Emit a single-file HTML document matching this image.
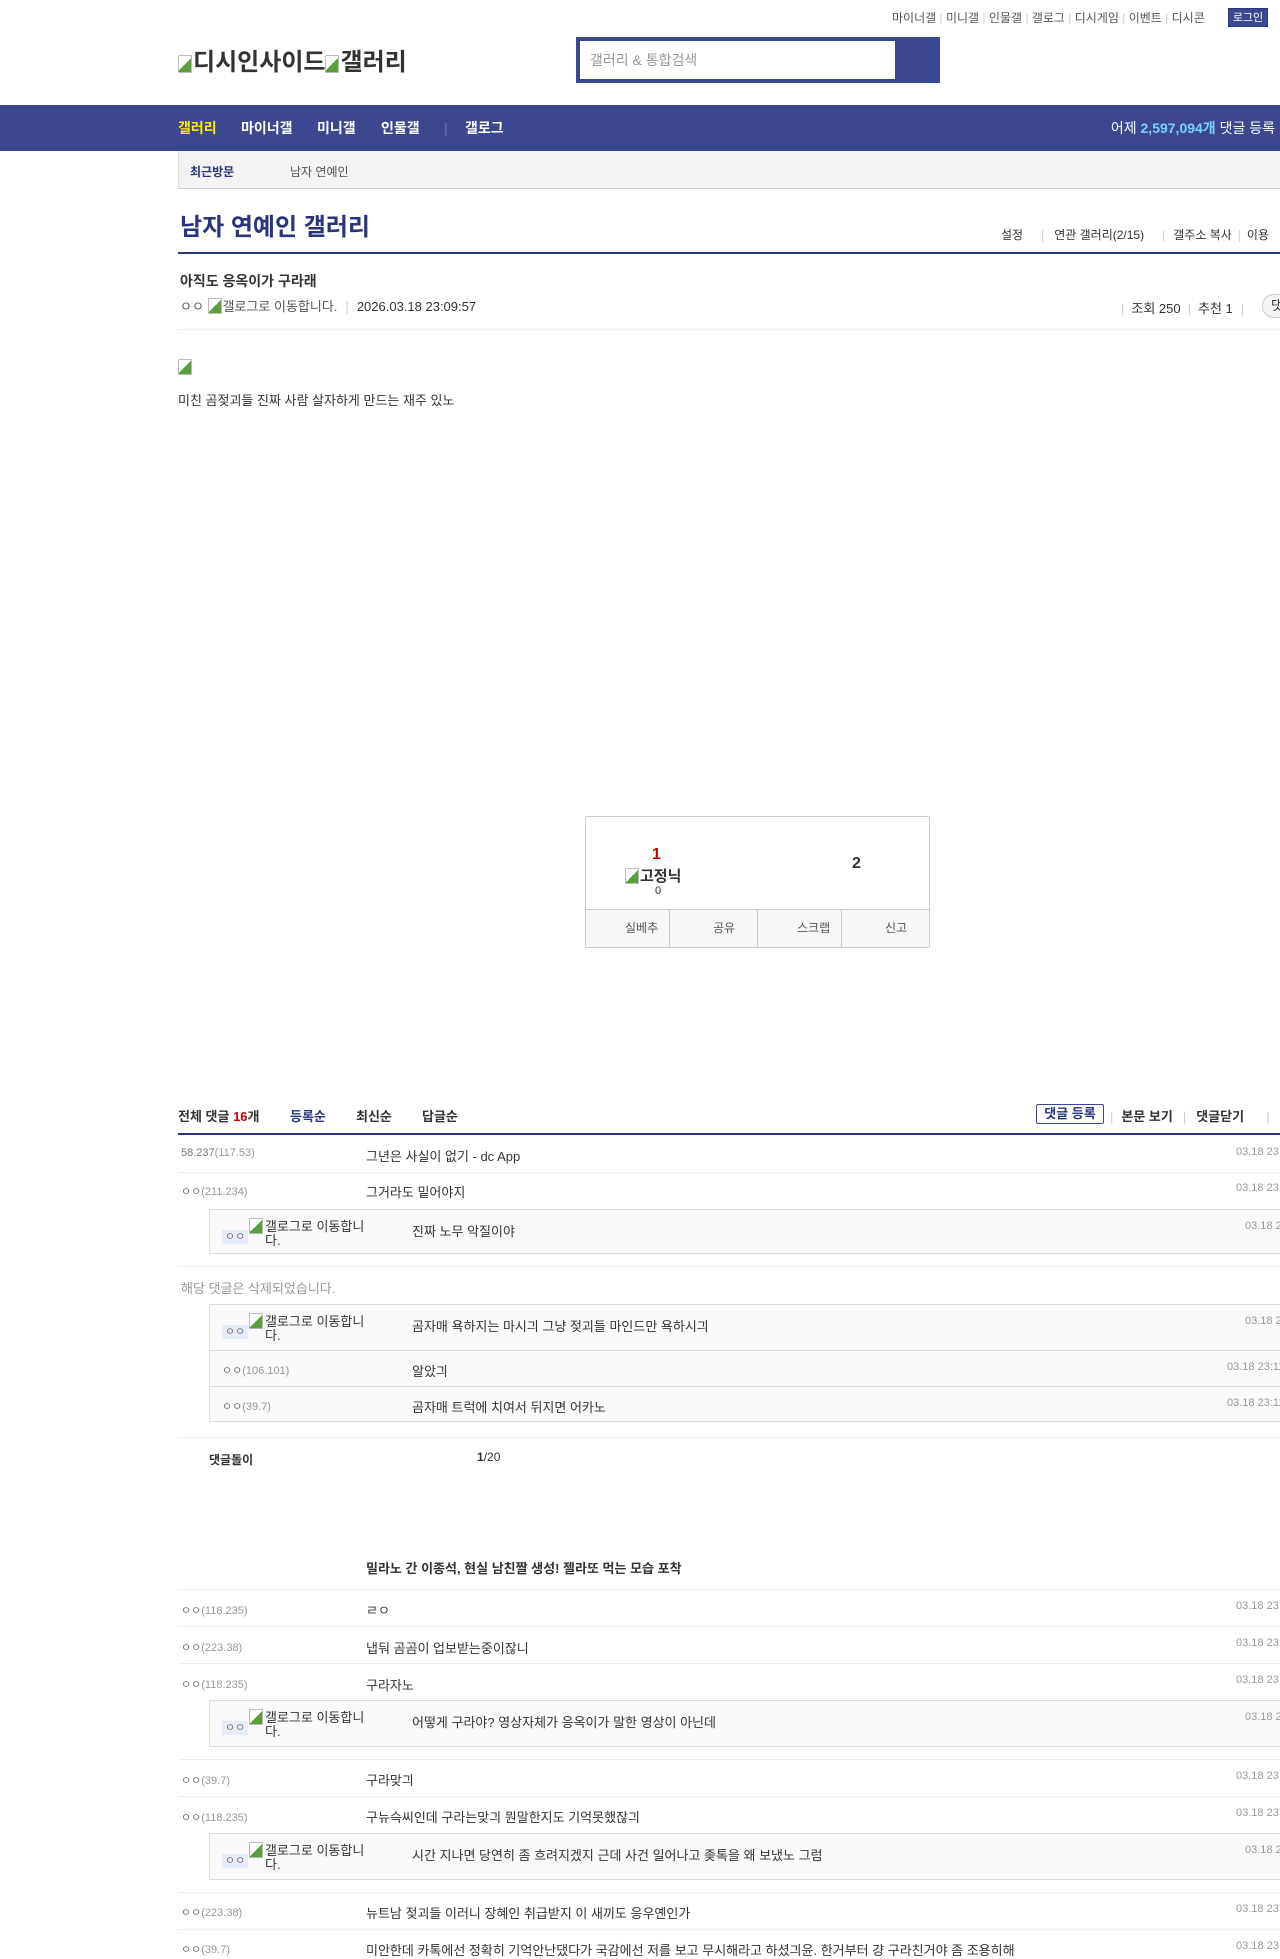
<!DOCTYPE html>
<html><head><meta charset="utf-8">
<style>
*{margin:0;padding:0;box-sizing:border-box}
body{width:1280px;height:1959px;overflow:hidden;position:relative;background:#fff;font-family:"Liberation Sans","Noto Sans CJK KR",sans-serif;color:#333;font-size:12px}
.a{position:absolute;white-space:nowrap}
.bi{display:inline-block;width:14px;height:16px;border:1px solid #bbb;border-radius:1px;vertical-align:-3px;background:linear-gradient(135deg,#fff 50%,#5a9f3a 50%);margin-right:1px}
.hl{position:absolute;left:178px;width:1102px;height:1px;background:#eee}
.nm{font-size:11px;color:#777}
.nm .ip{color:#999}
.ct{font-size:13px;color:#333}
.dt{font-size:11px;color:#999}
.rbox{position:absolute;left:209px;width:1080px;background:#fafafa;border:1px solid #ddd}
.tag{background:#e6ecfa;color:#777;font-size:11px;padding:1px 3px}
.gl{position:absolute;font-size:13px;color:#333;line-height:14px;white-space:normal;width:108px;word-break:break-all}
</style></head><body>

<div class="a" style="left:892px;top:9px;font-size:12px;color:#555">마이너갤<span style="color:#ccc"> | </span>미니갤<span style="color:#ccc"> | </span>인물갤<span style="color:#ccc"> | </span>갤로그<span style="color:#ccc"> | </span>디시게임<span style="color:#ccc"> | </span>이벤트<span style="color:#ccc"> | </span>디시콘</div>
<div class="a" style="left:1228px;top:8px;width:40px;height:19px;background:#3b4890;color:#fff;font-size:11px;text-align:center;line-height:19px;border:1px solid #29367c">로그인</div>

<div class="a" style="left:178px;top:42px;font-size:24px;color:#333;font-weight:bold"><span class="bi" style="width:14px;height:18px"></span>디시인사이드<span class="bi" style="width:14px;height:18px"></span>갤러리</div>

<div class="a" style="left:576px;top:37px;width:364px;height:46px;background:#3b4890"></div>
<div class="a" style="left:580px;top:41px;width:315px;height:38px;background:#fff;font-size:14px;color:#999;line-height:38px;padding-left:10px">갤러리 &amp; 통합검색</div>

<div class="a" style="left:0;top:105px;width:1280px;height:46px;background:#3b4890"></div>
<div class="a" style="left:178px;top:105px;line-height:46px;font-size:14px;font-weight:bold;color:#fff">
<span style="color:#ffea00">갤러리</span><span style="position:absolute;left:63px">마이너갤</span><span style="position:absolute;left:139px">미니갤</span><span style="position:absolute;left:203px">인물갤</span><span style="position:absolute;left:266px;color:#6b76b0;font-weight:normal">|</span><span style="position:absolute;left:287px">갤로그</span></div>
<div class="a" style="left:1095px;top:105px;line-height:46px;font-size:14px;color:#fff;width:180px;text-align:right">어제 <b style="color:#7cd1ff">2,597,094개</b> 댓글 등록</div>

<div class="a" style="left:178px;top:151px;width:1102px;height:38px;background:#f3f3f3;border-bottom:1px solid #ccc;border-left:1px solid #ddd"></div>
<div class="a" style="left:190px;top:163px;font-size:12px;font-weight:bold;color:#29367c">최근방문</div>
<div class="a" style="left:290px;top:163px;font-size:12px;color:#555">남자 연예인</div>

<div class="a" style="left:180px;top:207px;font-size:24px;font-weight:bold;color:#29367c">남자 연예인 갤러리</div>
<div class="a" style="left:1001px;top:226px;font-size:12px;color:#333">설정<span style="color:#ccc;margin:0 10px 0 18px">|</span>연관 갤러리(2/15)<span style="color:#ccc;margin:0 8px 0 18px">|</span>갤주소 복사<span style="color:#ccc;margin:0 6px">|</span>이용</div>
<div class="a" style="left:178px;top:252px;width:1102px;height:2px;background:#29367c"></div>

<div class="a" style="left:180px;top:271px;font-size:14px;font-weight:bold;color:#333">아직도 응옥이가 구라래</div>
<div class="a" style="left:180px;top:296px;font-size:13px;color:#555">ㅇㅇ <span class="bi"></span>갤로그로 이동합니다.<span style="color:#ccc;margin:0 8px">|</span><span style="color:#333">2026.03.18 23:09:57</span></div>
<div class="a" style="left:1121px;top:298px;font-size:13px;color:#333"><span style="color:#ccc;margin-right:7px">|</span>조회 250<span style="color:#ccc;margin:0 7px">|</span>추천 1<span style="color:#ccc;margin:0 8px">|</span></div>
<div class="a" style="left:1262px;top:294px;width:30px;height:24px;border:1px solid #ccc;border-radius:12px;background:#f5f5f5;font-size:13px;line-height:22px;padding-left:8px">댓</div>
<div class="hl" style="top:329px"></div>

<div class="a" style="left:178px;top:359px"><span class="bi"></span></div>
<div class="a" style="left:178px;top:390px;font-size:13px;color:#333">미친 곰젖괴들 진짜 사람 살자하게 만드는 재주 있노</div>

<div class="a" style="left:585px;top:816px;width:345px;height:132px;border:1px solid #ccc;border-radius:2px"></div>
<div class="a" style="left:652px;top:846px;font-size:16px;font-weight:bold;color:#c00">1</div>
<div class="a" style="left:625px;top:865px;font-size:15px;font-weight:bold;color:#333"><span class="bi"></span>고정닉</div>
<div class="a" style="left:655px;top:885px;font-size:11px;color:#333">0</div>
<div class="a" style="left:852px;top:855px;font-size:16px;font-weight:bold;color:#333">2</div>
<div class="a" style="left:586px;top:909px;width:343px;height:38px;background:#f7f7f7;border-top:1px solid #ccc;display:flex;font-size:12px;color:#555">
<div style="flex:1;border-right:1px solid #ccc;line-height:37px;padding-left:39px">실베추</div>
<div style="flex:1;border-right:1px solid #ccc;line-height:37px;padding-left:43px">공유</div>
<div style="flex:1;border-right:1px solid #ccc;line-height:37px;padding-left:39px">스크랩</div>
<div style="flex:1;line-height:37px;padding-left:43px">신고</div></div>

<div class="a" style="left:178px;top:1106px;font-size:13px;font-weight:bold;color:#333">전체 댓글 <span style="color:#c00">16</span>개<span style="color:#29367c;position:absolute;left:112px">등록순</span><span style="position:absolute;left:178px">최신순</span><span style="position:absolute;left:244px">답글순</span></div>
<div class="a" style="left:1036px;top:1104px;width:68px;height:20px;border:1px solid #3b4890;border-radius:2px;font-size:13px;font-weight:bold;color:#29367c;text-align:center;line-height:18px">댓글 등록</div>
<div class="a" style="left:1110px;top:1106px;font-size:13px;font-weight:bold;color:#333"><span style="color:#ccc;font-weight:normal;margin-right:8px">|</span>본문 보기<span style="color:#ccc;font-weight:normal;margin:0 10px">|</span>댓글닫기<span style="color:#ccc;font-weight:normal;margin-left:22px">|</span></div>
<div class="a" style="left:178px;top:1133px;width:1102px;height:2px;background:#29367c"></div>

<div class="a nm" style="left:181px;top:1147px">58.237<span class="ip">(117.53)</span></div>
<div class="a ct" style="left:366px;top:1146px">그년은 사실이 없기 - dc App</div>
<div class="a dt" style="left:1236px;top:1146px">03.18 23:10</div>
<div class="hl" style="top:1172px"></div>
<div class="a nm" style="left:181px;top:1183px">ㅇㅇ<span class="ip">(211.234)</span></div>
<div class="a ct" style="left:366px;top:1182px">그거라도 밑어야지</div>
<div class="a dt" style="left:1236px;top:1182px">03.18 23:10</div>

<div class="rbox" style="top:1209px;height:45px"></div>
<div class="a" style="left:222px;top:1228px"><span class="tag">ㅇㅇ</span></div>
<div class="a" style="left:249px;top:1218px"><span class="bi"></span></div>
<div class="gl" style="left:265px;top:1220px">갤로그로 이동합니다.</div>
<div class="a ct" style="left:412px;top:1221px">진짜 노무 악질이야</div>
<div class="a dt" style="left:1245px;top:1220px">03.18 23:10</div>
<div class="hl" style="top:1266px"></div>

<div class="a" style="left:181px;top:1278px;font-size:13px;color:#999">해당 댓글은 삭제되었습니다.</div>

<div class="rbox" style="top:1304px;height:118px"></div>
<div class="a" style="left:222px;top:1323px"><span class="tag">ㅇㅇ</span></div>
<div class="a" style="left:249px;top:1313px"><span class="bi"></span></div>
<div class="gl" style="left:265px;top:1315px">갤로그로 이동합니다.</div>
<div class="a ct" style="left:412px;top:1316px">곰자매 욕하지는 마시긔 그냥 젖괴들 마인드만 욕하시긔</div>
<div class="a dt" style="left:1245px;top:1315px">03.18 23:10</div>
<div class="a" style="left:210px;top:1350px;width:1070px;height:1px;background:#ddd"></div>
<div class="a nm" style="left:222px;top:1362px">ㅇㅇ<span class="ip">(106.101)</span></div>
<div class="a ct" style="left:412px;top:1361px">알았긔</div>
<div class="a dt" style="left:1227px;top:1361px">03.18 23:11</div>
<div class="a" style="left:210px;top:1386px;width:1070px;height:1px;background:#ddd"></div>
<div class="a nm" style="left:222px;top:1398px">ㅇㅇ<span class="ip">(39.7)</span></div>
<div class="a ct" style="left:412px;top:1397px">곰자매 트럭에 치여서 뒤지면 어카노</div>
<div class="a dt" style="left:1227px;top:1397px">03.18 23:11</div>
<div class="hl" style="top:1437px"></div>

<div class="a" style="left:209px;top:1451px;font-size:12px;font-weight:bold;color:#333">댓글돌이</div>
<div class="a" style="left:477px;top:1450px;font-size:12px;color:#333"><b>1</b>/20</div>

<div class="a" style="left:366px;top:1558px;font-size:13px;font-weight:bold;color:#333">밀라노 간 이종석, 현실 남친짤 생성! 젤라또 먹는 모습 포착</div>
<div class="hl" style="top:1589px"></div>

<div class="a nm" style="left:181px;top:1602px">ㅇㅇ<span class="ip">(118.235)</span></div>
<div class="a ct" style="left:366px;top:1600px">ㄹㅇ</div>
<div class="a dt" style="left:1236px;top:1600px">03.18 23:11</div>
<div class="hl" style="top:1626px"></div>
<div class="a nm" style="left:181px;top:1639px">ㅇㅇ<span class="ip">(223.38)</span></div>
<div class="a ct" style="left:366px;top:1638px">냅둬 곰곰이 업보받는중이잖니</div>
<div class="a dt" style="left:1236px;top:1637px">03.18 23:11</div>
<div class="hl" style="top:1663px"></div>
<div class="a nm" style="left:181px;top:1676px">ㅇㅇ<span class="ip">(118.235)</span></div>
<div class="a ct" style="left:366px;top:1675px">구라자노</div>
<div class="a dt" style="left:1236px;top:1674px">03.18 23:11</div>

<div class="rbox" style="top:1700px;height:47px"></div>
<div class="a" style="left:222px;top:1719px"><span class="tag">ㅇㅇ</span></div>
<div class="a" style="left:249px;top:1709px"><span class="bi"></span></div>
<div class="gl" style="left:265px;top:1711px">갤로그로 이동합니다.</div>
<div class="a ct" style="left:412px;top:1712px">어떻게 구라야? 영상자체가 응옥이가 말한 영상이 아닌데</div>
<div class="a dt" style="left:1245px;top:1711px">03.18 23:12</div>
<div class="hl" style="top:1759px"></div>

<div class="a nm" style="left:181px;top:1772px">ㅇㅇ<span class="ip">(39.7)</span></div>
<div class="a ct" style="left:366px;top:1770px">구라맞긔</div>
<div class="a dt" style="left:1236px;top:1770px">03.18 23:12</div>
<div class="hl" style="top:1796px"></div>
<div class="a nm" style="left:181px;top:1809px">ㅇㅇ<span class="ip">(118.235)</span></div>
<div class="a ct" style="left:366px;top:1807px">구뉴슥씨인데 구라는맞긔 뭔말한지도 기억못했잖긔</div>
<div class="a dt" style="left:1236px;top:1807px">03.18 23:12</div>

<div class="rbox" style="top:1833px;height:47px"></div>
<div class="a" style="left:222px;top:1852px"><span class="tag">ㅇㅇ</span></div>
<div class="a" style="left:249px;top:1842px"><span class="bi"></span></div>
<div class="gl" style="left:265px;top:1844px">갤로그로 이동합니다.</div>
<div class="a ct" style="left:412px;top:1845px">시간 지나면 당연히 좀 흐려지겠지 근데 사건 일어나고 좆톡을 왜 보냈노 그럼</div>
<div class="a dt" style="left:1245px;top:1844px">03.18 23:13</div>
<div class="hl" style="top:1892px"></div>

<div class="a nm" style="left:181px;top:1904px">ㅇㅇ<span class="ip">(223.38)</span></div>
<div class="a ct" style="left:366px;top:1903px">뉴트남 젖괴들 이러니 장혜인 취급받지 이 새끼도 응우옌인가</div>
<div class="a dt" style="left:1236px;top:1903px">03.18 23:13</div>
<div class="hl" style="top:1929px"></div>
<div class="a nm" style="left:181px;top:1941px">ㅇㅇ<span class="ip">(39.7)</span></div>
<div class="a ct" style="left:366px;top:1940px">미안한데 카톡에선 정확히 기억안난댔다가 국감에선 저를 보고 무시해라고 하셨긔윤. 한거부터 걍 구라친거야 좀 조용히해</div>
<div class="a dt" style="left:1236px;top:1940px">03.18 23:13</div>

</body></html>
